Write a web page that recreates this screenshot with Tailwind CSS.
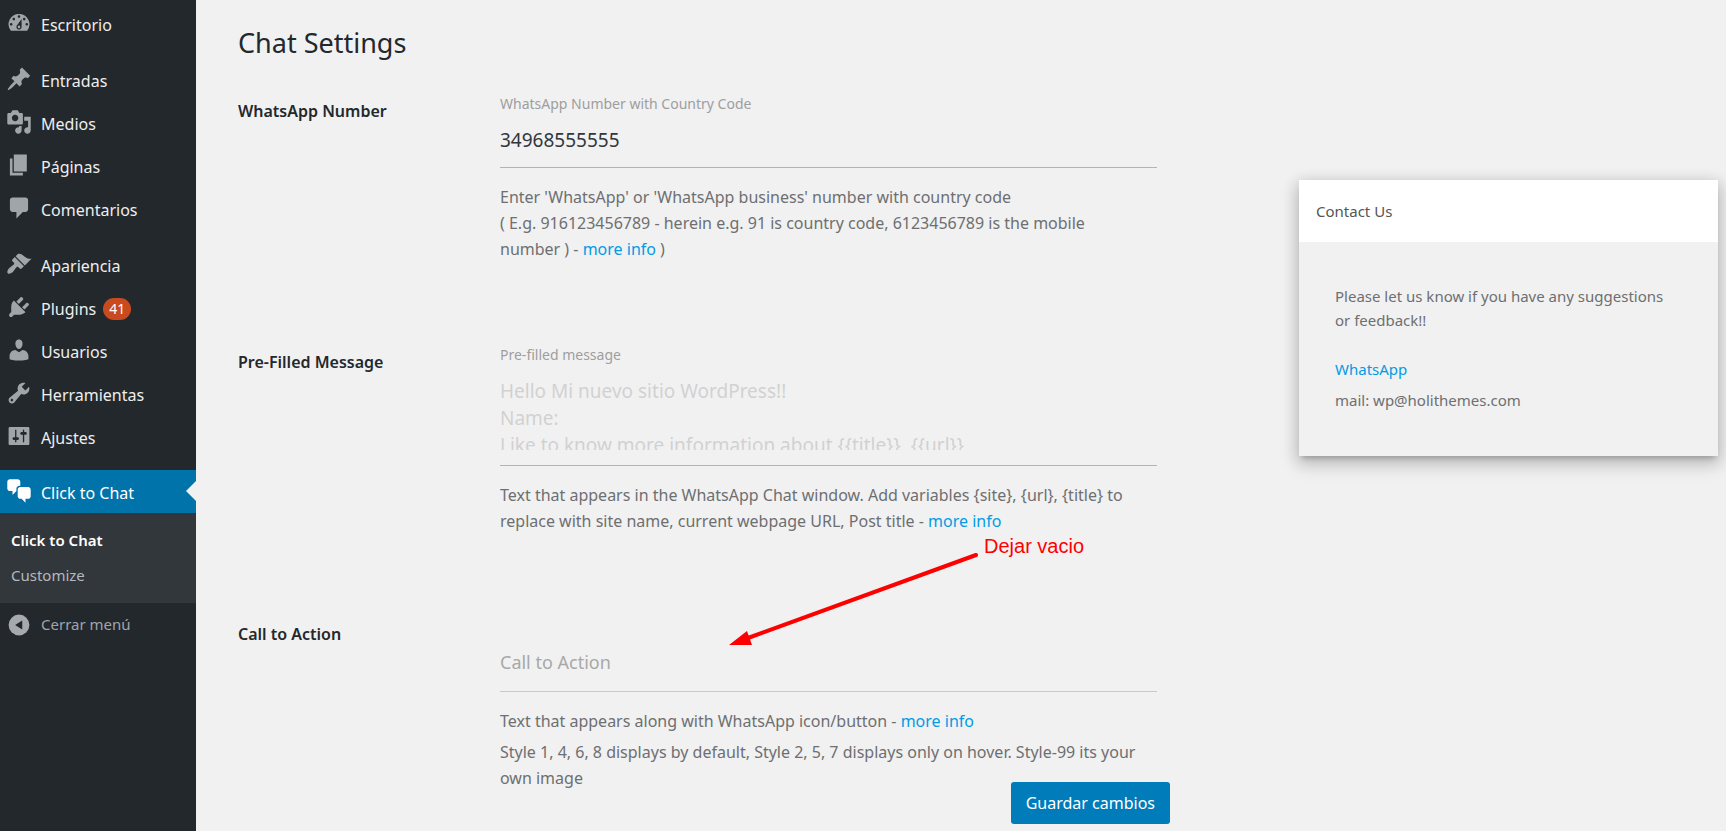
<!DOCTYPE html>
<html lang="es">
<head>
  <meta charset="utf-8">
  <meta name="viewport" content="width=device-width, initial-scale=1.0">
  <title>Click to Chat</title>
  <script src="https://cdn.jsdelivr.net/npm/@tailwindcss/browser@4"></script>
</head>
<body class="flex min-h-screen bg-[#f1f1f1] font-['Noto_Sans',sans-serif] text-[16px] text-[#6d6f71]">

  <!-- Admin menu -->
  <nav class="w-[196px] shrink-0 bg-[#23282d] pt-[2px] text-[#eee]">
    <ul>
      <li><a href="#" class="flex h-[43px] items-center gap-[9px] pt-[2px] pl-[6px]">
        <svg class="mb-[4px] size-[26px] fill-[#a0a5aa]" viewBox="0 0 20 20"><path d="M3.76 16h12.48A7.998 7.998 0 0 0 10 3a7.998 7.998 0 0 0-6.24 13zM10 4c.55 0 1 .45 1 1s-.45 1-1 1-1-.45-1-1 .45-1 1-1zM6 6c.55 0 1 .45 1 1s-.45 1-1 1-1-.45-1-1 .45-1 1-1zm8 0c.55 0 1 .45 1 1s-.45 1-1 1-1-.45-1-1 .45-1 1-1zm-5.37 5.55L12 7v6c0 1.1-.9 2-2 2s-2-.9-2-2c0-.57.24-1.08.63-1.45zM4 10c.55 0 1 .45 1 1s-.45 1-1 1-1-.45-1-1 .45-1 1-1zm12 0c.55 0 1 .45 1 1s-.45 1-1 1-1-.45-1-1 .45-1 1-1zm-5 3c0-.55-.45-1-1-1s-1 .45-1 1 .45 1 1 1 1-.45 1-1z"/></svg>
        Escritorio</a></li>
      <li class="mt-[13px]"><a href="#" class="flex h-[43px] items-center gap-[9px] pt-[2px] pl-[6px]">
        <svg class="mb-[4px] size-[26px] fill-[#a0a5aa]" viewBox="0 0 20 20"><path d="M10.44 3.02l1.82-1.82 6.36 6.35-1.83 1.82c-1.05-.68-2.48-.57-3.41.36l-.75.75c-.92.93-1.04 2.35-.35 3.41l-1.83 1.82-2.41-2.41-2.8 2.79c-.42.42-3.38 2.71-3.8 2.29s1.86-3.39 2.28-3.81l2.79-2.79L4.1 9.36l1.83-1.82c1.05.69 2.48.57 3.4-.36l.75-.75c.93-.92 1.05-2.35.36-3.41z"/></svg>
        Entradas</a></li>
      <li><a href="#" class="flex h-[43px] items-center gap-[9px] pt-[2px] pl-[6px]">
        <svg class="mb-[4px] size-[26px] fill-[#a0a5aa]" viewBox="0 0 20 20"><path d="M13 11V4c0-.55-.45-1-1-1h-1.67L9 1H5L3.67 3H2c-.55 0-1 .45-1 1v7c0 .55.45 1 1 1h10c.55 0 1-.45 1-1zM7 4.5c1.38 0 2.5 1.12 2.5 2.5S8.38 9.5 7 9.5 4.5 8.38 4.5 7 5.62 4.5 7 4.5zM14 6h5v10.5c0 1.38-1.12 2.5-2.5 2.5S14 17.88 14 16.5s1.12-2.5 2.5-2.5c.17 0 .34.02.5.05V9h-3V6zm-4 8.05V13h2v3.5c0 1.38-1.12 2.5-2.5 2.5S7 17.88 7 16.5 8.12 14 9.5 14c.17 0 .34.02.5.05z"/></svg>
        Medios</a></li>
      <li><a href="#" class="flex h-[43px] items-center gap-[9px] pt-[2px] pl-[6px]">
        <svg class="mb-[4px] size-[26px] fill-[#a0a5aa]" viewBox="0 0 20 20"><path d="M6 15V2h10v13H6zm-1 1h8v2H3V5h2v11z"/></svg>
        Páginas</a></li>
      <li><a href="#" class="flex h-[43px] items-center gap-[9px] pt-[2px] pl-[6px]">
        <svg class="mb-[4px] size-[26px] fill-[#a0a5aa]" viewBox="0 0 20 20"><path d="M5 2h10c1.1 0 2 .9 2 2v7c0 1.1-.9 2-2 2h-2l-5 5v-5H5c-1.1 0-2-.9-2-2V4c0-1.1.9-2 2-2z"/></svg>
        Comentarios</a></li>
      <li class="mt-[13px]"><a href="#" class="flex h-[43px] items-center gap-[9px] pt-[2px] pl-[6px]">
        <svg class="mb-[4px] size-[26px] fill-[#a0a5aa]" viewBox="0 0 20 20"><path d="M14.48 11.06L7.41 3.99l1.5-1.5c.5-.56 2.3-.47 3.51.32 1.21.8 1.43 1.28 2.91 2.1 1.18.64 2.45 1.26 4.45.85zm-.71.71L6.7 4.7 4.93 6.47c-.39.39-.39 1.02 0 1.41l1.06 1.06c.39.39.39 1.03 0 1.42-.6.6-1.43 1.11-2.21 1.69-.35.26-.7.53-1.01.84C1.43 14.23.4 16.08 1.4 17.07c.99 1 2.84-.03 4.18-1.36.31-.31.58-.66.85-1.02.57-.78 1.08-1.61 1.69-2.21.39-.39 1.02-.39 1.41 0l1.06 1.06c.39.39 1.02.39 1.41 0z"/></svg>
        Apariencia</a></li>
      <li><a href="#" class="flex h-[43px] items-center gap-[9px] pt-[2px] pl-[6px]">
        <svg class="mb-[4px] size-[26px] fill-[#a0a5aa]" viewBox="0 0 20 20"><path d="M13.11 4.36L9.87 7.6 8 5.73l3.24-3.24c.35-.34 1.05-.2 1.56.32.52.51.66 1.21.31 1.55zm-8 1.77l.91-1.12 9.01 9.01-1.19.84c-.71.71-2.63 1.16-3.82 1.16H6.14L4.9 17.26c-.59.59-1.54.59-2.12 0-.59-.58-.59-1.53 0-2.12l1.24-1.24v-3.88c0-1.13.4-3.19 1.09-3.89zm7.26 3.97l3.24-3.24c.34-.35 1.04-.21 1.55.31.52.51.66 1.21.31 1.55l-3.24 3.25z"/></svg>
        <span class="flex items-center gap-[7px]">Plugins <span class="rounded-full bg-[#ca4a1f] px-[6px] text-[14px] leading-[22px] text-white">41</span></span></a></li>
      <li><a href="#" class="flex h-[43px] items-center gap-[9px] pt-[2px] pl-[6px]">
        <svg class="mb-[4px] size-[26px] fill-[#a0a5aa]" viewBox="0 0 20 20"><path d="M10 9.25c-2.27 0-2.73-3.44-2.73-3.44C7 4.02 7.82 2 9.97 2c2.16 0 2.98 2.02 2.71 3.81 0 0-.41 3.44-2.68 3.44zm0 2.57L12.72 10c2.39 0 4.52 2.33 4.52 4.53v2.49s-3.65 1.13-7.24 1.13c-3.65 0-7.24-1.13-7.24-1.13v-2.49c0-2.25 1.94-4.48 4.47-4.48z"/></svg>
        Usuarios</a></li>
      <li><a href="#" class="flex h-[43px] items-center gap-[9px] pt-[2px] pl-[6px]">
        <svg class="mb-[4px] size-[26px] fill-[#a0a5aa]" viewBox="0 0 20 20"><path d="M16.68 9.77c-1.34 1.34-3.3 1.67-4.95.99l-5.41 6.52c-.99.99-2.59.99-3.58 0s-.99-2.59 0-3.57l6.52-5.42c-.68-1.65-.35-3.61.99-4.95 1.28-1.28 3.12-1.62 4.72-1.06l-2.89 2.89 2.82 2.82 2.86-2.87c.53 1.58.18 3.39-1.08 4.65zM3.81 16.21c.4.39 1.04.39 1.43 0 .4-.4.4-1.04 0-1.43-.39-.4-1.03-.4-1.43 0-.39.39-.39 1.03 0 1.43z"/></svg>
        Herramientas</a></li>
      <li><a href="#" class="flex h-[43px] items-center gap-[9px] pt-[2px] pl-[6px]">
        <svg class="mb-[4px] size-[26px] fill-[#a0a5aa]" viewBox="0 0 20 20"><path d="M18 16V4c0-.55-.45-1-1-1H3c-.55 0-1 .45-1 1v12c0 .55.45 1 1 1h14c.55 0 1-.45 1-1zM8 11h1c.55 0 1 .45 1 1s-.45 1-1 1H8v1.5c0 .28-.22.5-.5.5s-.5-.22-.5-.5V13H6c-.55 0-1-.45-1-1s.45-1 1-1h1V5.5c0-.28.22-.5.5-.5s.5.22.5.5V11zm5-2h-1c-.55 0-1-.45-1-1s.45-1 1-1h1V5.5c0-.28.22-.5.5-.5s.5.22.5.5V7h1c.55 0 1 .45 1 1s-.45 1-1 1h-1v5.5c0 .28-.22.5-.5.5s-.5-.22-.5-.5V9z"/></svg>
        Ajustes</a></li>
      <li class="mt-[12px]">
        <a href="#" class="relative flex h-[43px] items-center gap-[9px] bg-[#0073aa] pt-[2px] pl-[6px] text-white">
          <svg class="mb-[4px] size-[26px] fill-white" viewBox="0 0 20 20"><path d="M11 6h-.82C9.07 6 8 7.2 8 8.16V10l-3 3v-3H3c-1.1 0-2-.9-2-2V3c0-1.1.9-2 2-2h6c1.1 0 2 .9 2 2v3zm0 1h6c1.1 0 2 .9 2 2v5c0 1.1-.9 2-2 2h-2v3l-3-3h-1c-1.1 0-2-.9-2-2V9c0-1.1.9-2 2-2z"/></svg>
          Click to Chat
          <svg class="absolute top-[11px] right-0 h-5 w-[10px] fill-[#f1f1f1]" viewBox="0 0 10 20"><path d="M10 0v20L0 10z"/></svg>
        </a>
        <ul class="bg-[#32373c] pt-[10px] pb-[10px] pl-[11px] text-[15px] leading-[35px]">
          <li><a href="#" class="font-semibold text-white">Click to Chat</a></li>
          <li><a href="#" class="text-[#b4b9be]">Customize</a></li>
        </ul>
      </li>
      <li><button type="button" class="flex h-[43px] w-full items-center gap-[9px] pl-[6px] text-[15px] text-[#a0a5aa]">
        <svg class="size-[26px]" viewBox="0 0 20 20"><circle cx="10" cy="10" r="8" fill="#a7aaad"/><path fill="#23282d" d="M12.500 6.500v7L7 10z"/></svg>
        Cerrar menú</button></li>
    </ul>
  </nav>

  <main class="flex min-w-0 flex-1 items-start pr-2 pl-[42px]">
    <form class="relative min-h-screen min-w-0 flex-1">
      <h1 class="h-[87px] pt-[25px] text-[27px] leading-9 text-[#23282d]">Chat Settings</h1>

      <table class="w-full table-fixed text-left leading-[26px]">
        <tbody>
          <tr class="align-top">
            <th class="w-[262px] pt-[11px] font-semibold text-[#23282d]">WhatsApp Number</th>
            <td class="pt-[7px] pb-[76px]">
              <label for="number" class="block text-[14px] leading-5 text-[#9e9e9e]">WhatsApp Number with Country Code</label>
              <input id="number" type="text" value="34968555555" class="h-[54px] w-full border-b border-[#b3b3b3] pb-[2px] text-[19px] text-[#32373c] outline-none">
              <p class="mt-[16px]">Enter 'WhatsApp' or 'WhatsApp business' number with country code<br>( E.g. 916123456789 - herein e.g. 91 is country code, 6123456789 is the mobile<br>number ) - <a href="#" class="text-[#039be5]">more info</a> )</p>
            </td>
          </tr>
          <tr class="align-top">
            <th class="pt-[11px] font-semibold text-[#23282d]">Pre-Filled Message</th>
            <td class="pt-[7px] pb-[76px]">
              <label for="message" class="block text-[14px] leading-5 text-[#9e9e9e]">Pre-filled message</label>
              <div class="border-b border-[#b3b3b3] pt-[13px] pb-[15px]">
                <textarea id="message" placeholder="Hello Mi nuevo sitio WordPress!!&#10;Name:&#10;Like to know more information about {{title}}, {{url}}" class="block h-[72px] w-full resize-none overflow-hidden text-[19px] leading-[27px] outline-none placeholder:text-[#d1d1d1]"></textarea>
              </div>
              <p class="mt-[16px]">Text that appears in the WhatsApp Chat window. Add variables {site}, {url}, {title} to replace with site name, current webpage URL, Post title - <a href="#" class="text-[#039be5]">more info</a></p>
            </td>
          </tr>
          <tr class="align-top">
            <th class="pt-[11px] font-semibold text-[#23282d]"><label for="cta">Call to Action</label></th>
            <td class="pt-[28px]">
              <input id="cta" type="text" placeholder="Call to Action" class="h-[54px] w-full border-b border-[#c8c8c8] pb-[6px] text-[18px] outline-none placeholder:text-[#a8a8a8]">
              <p class="mt-[16px]">Text that appears along with WhatsApp icon/button - <a href="#" class="text-[#039be5]">more info</a></p>
              <p class="mt-[5px]">Style 1, 4, 6, 8 displays by default, Style 2, 5, 7 displays only on hover. Style-99 its your own image</p>
            </td>
          </tr>
        </tbody>
      </table>

      <!-- Annotation -->
      <svg class="absolute top-[550px] left-[490px] h-[100px] w-[254px]" viewBox="0 0 254 100">
        <path d="M248 5L20 88" stroke="#f00" stroke-width="4" stroke-linecap="round"/>
        <path d="M1 95L19 81L24 95z" fill="#f00"/>
      </svg>
      <span class="absolute top-[534px] left-[746px] font-['Liberation_Sans',sans-serif] text-[20px] leading-6 text-[#f00]">Dejar vacio</span>

      <button type="submit" class="absolute right-[-13px] bottom-[7px] h-[42px] rounded-[3px] bg-[#007cba] px-[15px] text-white">Guardar cambios</button>
    </form>

    <!-- Contact card -->
    <aside class="mt-[180px] ml-[142px] w-[419px] shrink-0 shadow-[0_8px_17px_2px_rgba(0,0,0,0.14),0_3px_14px_2px_rgba(0,0,0,0.12),0_5px_5px_-3px_rgba(0,0,0,0.2)]">
      <h2 class="bg-white px-[17px] py-[19px] text-[15px] leading-6 text-[#555]">Contact Us</h2>
      <div class="pt-[42px] pr-[48px] pb-[44px] pl-[36px] text-[15px] leading-6">
        <p>Please let us know if you have any suggestions or feedback!!</p>
        <p class="mt-[25px]"><a href="#" class="text-[#039be5]">WhatsApp</a></p>
        <p class="mt-[7px]">mail: wp@holithemes.com</p>
      </div>
    </aside>
  </main>
</body>
</html>
